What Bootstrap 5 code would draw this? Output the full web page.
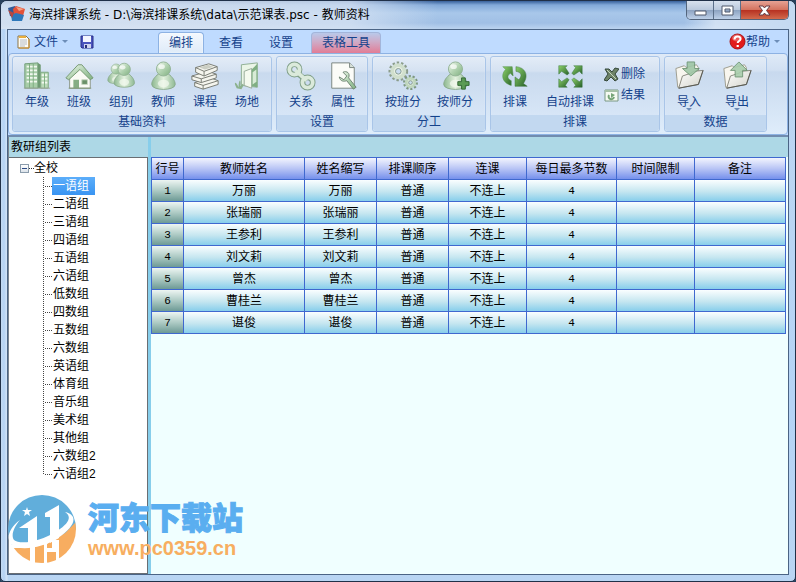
<!DOCTYPE html>
<html lang="zh-CN">
<head>
<meta charset="utf-8">
<meta name="viewport" content="width=device-width, initial-scale=1">
<title>海滨排课系统 - 教师资料</title>
<link rel="stylesheet" href="https://cdn.jsdelivr.net/npm/bootstrap@5.3.0/dist/css/bootstrap.min.css">
<style>
body{font:12px/18px "Liberation Sans","Noto Sans CJK SC",sans-serif;color:#000;background:#28405c}
button{font:inherit;color:inherit;background:none;border:0;padding:0}
.app-window{min-height:100vh;border:1px solid #203048;border-radius:7px 7px 5px 5px;padding:0 6px 6px;
 background:linear-gradient(90deg,#c3daf3,#b4d2f4 3px,#d4e5f8 6px,transparent 7px),linear-gradient(#c6d9ef 0,#bcd6f2 90px,#b5d4f6 400px,#b9d5f3)}
.title-bar{height:28px;margin:0 -6px;padding-left:7px;border-radius:6px 6px 0 0;
 background:linear-gradient(90deg,#cbdcef00 0,#cbdcef00 86%,#dce8f6cc 90%,#c4d9f1 100%),linear-gradient(90deg,#dce6f3cc,#dfe7f3cc 15%,#d5e2f3cc 44%,#b9d2ef00 55%),linear-gradient(#37609b,#82a9d9 4px,#a8c7ea 12px,#a0bfe5 22px,#bbd3ef)}
.title-text{font-family:"DejaVu Sans","Noto Sans CJK SC",sans-serif;line-height:20px}
.caption-buttons{height:19px;border:1px solid #52647c;border-top:0;border-radius:0 0 5px 5px;overflow:hidden;margin-right:6px}
.caption-buttons button{width:27px;border-right:1px solid #5b6f89;background:linear-gradient(#d8e1ee,#bac9dd 48%,#8ea4c2 52%,#bdd0e8)}
.caption-buttons .close-win{width:47px;border:0;background:linear-gradient(#e6a294,#d4735f 48%,#b73222 52%,#d26a4c)}
.client{border:1px solid #4b6485;background:#bfdbff}
.tab-strip{height:23px;color:#15428b;padding:0 8px 0 9px}
.quick{width:141px}
.caret-down{border:3px solid transparent;border-top-color:#6d8db8;border-bottom:0}
.ribbon-tabs{gap:4px}
.ribbon-tabs button{width:46px;height:21px;border:1px solid transparent;border-bottom:0;border-radius:4px 4px 0 0}
.ribbon-tabs .is-active{background:linear-gradient(#f3f8fe,#dfebf8);border-color:#8db2e3;box-shadow:0 0 2px #fff inset}
.ribbon-tabs .context-tab{width:70px;margin-left:3px;background:linear-gradient(#b9c9ea,#cfaac6 45%,#e27d96);border-color:#a3b5da}
.ribbon{border:1px solid #8db2e3;border-radius:4px;padding:2px 3px;gap:4px;
 background:linear-gradient(#dfeaf7,#d2e0f2 16px,#c8d9ee 18px,#dfedfb);color:#15428b}
.ribbon-group{border:1px solid #a9c5e8;border-radius:3px;background:linear-gradient(#e3ecf7,#d5e2f2 14px,#c9daee 16px,#dceafa);box-shadow:inset 0 0 1px #fff}
.group-items{height:58px;padding:3px 3px 0}
.group-name{height:16px;line-height:15px;text-align:center;background:#c2d8f0;border-radius:0 0 3px 3px}
.tool{width:42px;line-height:17px;position:relative}
.tool svg{display:block;margin:0 auto 2px;width:30px;height:32px}
.tool-wide{width:52px}
.tool .caret-down{position:absolute;left:18px;bottom:0}
.small-tools{gap:4px;padding:6px 11px 0 8px}
.small-tools button{line-height:17px;gap:2px}
.data-tools{gap:6px}
.workspace{background:#f0ffff;border-top:2px solid #718caf}
.side-panel{width:140px;background:#add8e6;border-left:1px solid #7b8590}
.panel-head{height:20px;line-height:21px;padding-left:2px}
.tree-box{background:#fff;border:1px solid #696e73;border-left:0;padding:1px 0 0 11px}
.tree-line{height:18px;line-height:17px}
.toggle{width:9px;height:9px;border:1px solid #8b9cac;background:linear-gradient(#fff,#dce3ea);display:flex;align-items:center;justify-content:center}
.toggle::after{content:"";width:5px;height:1px;background:#2c4a86}
.stub{width:5px;border-top:1px dotted #333}
.tree-list{margin:0 0 0 23px;padding:0;list-style:none;font-size:12px}
.tree-list li{height:18px;padding-left:9px;
 background:repeating-linear-gradient(#444 0 1px,#fff 1px 2px) 0 0/1px 100% no-repeat,repeating-linear-gradient(90deg,#444 0 1px,#fff 1px 2px) 0 9px/9px 1px no-repeat}
.tree-list li:last-child{background-size:1px 10px,9px 1px}
.tree-list a{display:inline-block;line-height:18px;height:18px;padding:0 6px 0 1px;color:#000;text-decoration:none}
.tree-list a.is-selected{background:linear-gradient(#5caefa,#3994f2);color:#fff}
.split-bar{width:3px;background:#87ceeb}
.grid-head{height:20px;background:#add8e6}
.grid-wrap{padding-right:2px}
.teacher-grid{width:100%;table-layout:fixed;border-collapse:collapse;text-align:center}
.teacher-grid th,.teacher-grid td{height:22px;line-height:18px;padding:0;border:1px solid #3f68cf;font-weight:400;background-clip:padding-box}
.teacher-grid thead th{background-image:linear-gradient(#f3f5fe,#b9c5f5 50%,#7590ec)}
.teacher-grid td{background-image:linear-gradient(#fafeff,#c5e6f0 55%,#87ceeb)}
.teacher-grid tbody th{background-image:linear-gradient(#edf5f2,#aecbc5 50%,#6d9a95)}
.teacher-grid tbody th,.teacher-grid .num{font-family:"Liberation Mono",monospace;font-size:11px}
.c-no{width:32px}.c-name{width:121px}.c-std{width:72px}.c-mid{width:78px}.c-max{width:90px}
.site-mark{position:absolute;left:6px;bottom:16px;gap:11px;pointer-events:none}
.site-name{font:900 31px/38px "Noto Sans CJK SC",sans-serif;color:#5aaef0;-webkit-text-stroke:1px #5aaef0}
.site-url{font:bold 20px/27px "Liberation Sans",sans-serif;color:#f7ae60}
</style>
<script src="https://cdn.jsdelivr.net/npm/bootstrap@5.3.0/dist/js/bootstrap.bundle.min.js"></script>
</head>
<body>
<svg width="0" height="0" class="position-absolute" aria-hidden="true">
 <defs>
  <linearGradient id="gr" x1="0" y1="0" x2="1" y2="1"><stop offset="0" stop-color="#f4faf2"/><stop offset=".5" stop-color="#b2d3b1"/><stop offset="1" stop-color="#80b081"/></linearGradient>
  <linearGradient id="bodyfill" x1="0" y1="0" x2="1" y2="0"><stop offset="0" stop-color="#8db890"/><stop offset=".5" stop-color="#e4f2df"/><stop offset="1" stop-color="#8fba94"/></linearGradient>
  <linearGradient id="arrow" x1="0" y1="0" x2="1" y2="1"><stop offset="0" stop-color="#8fd36b"/><stop offset="1" stop-color="#255e28"/></linearGradient>
  <linearGradient id="paper" x1="0" y1="0" x2="1" y2="1"><stop offset="0" stop-color="#fff"/><stop offset="1" stop-color="#d3d3ca"/></linearGradient>
  <clipPath id="disc"><circle cx="35" cy="36" r="34"/></clipPath>
  <symbol id="person" viewBox="0 0 32 32"><path d="M11 14C7 17 4 21 4 25c0 7 25 7 25 0 0-4-3-8-7-11z" fill="url(#bodyfill)" stroke="#87a98a"/><circle cx="16.500" cy="8.500" r="7.500" fill="url(#gr)" stroke="#91b294"/><ellipse cx="14.500" cy="6" rx="3.500" ry="2.500" fill="#fff" opacity=".7"/><ellipse cx="16.500" cy="24" rx="6" ry="4" fill="#f3faef" opacity=".7"/></symbol>
  <symbol id="folder" viewBox="0 0 32 32"><path d="M2 8l9-3 2 2 11-3 2 3-1 18-21 3z" fill="#f8f6ef" stroke="#9b9a8c"/><path d="M5 29l4-13 9-3 3-2 10-1-5 15z" fill="url(#paper)" stroke="#85857b"/><path d="M5 29l21-4 5-15" fill="none" stroke="#55564f"/></symbol>
 </defs>
</svg>

<div class="app-window d-flex flex-column position-relative">
 <header class="title-bar d-flex align-items-start">
  <svg class="mt-1 me-1 flex-shrink-0" width="17" height="17" viewBox="0 0 17 17"><path d="M0 3l7-2 3 4-2 8-6-2z" fill="#315a98"/><path d="M5 4l3-3 9 3-2 7-9-1z" fill="#e35138"/><path d="M8 2l8 2-5 2z" fill="#f6a082"/><path d="M3 10l5-2 8 2-2 6H4z" fill="#2e78ba"/><path d="M0 5l6 3-2 5z" fill="#b8473e"/></svg>
  <div class="title-text flex-grow-1 text-truncate pt-1">海滨排课系统 - D:\海滨排课系统\data\示范课表.psc - 教师资料</div>
  <div class="caption-buttons d-flex flex-shrink-0">
   <button aria-label="最小化"><svg width="13" height="12" viewBox="0 0 13 12"><path d="M1 6h11v4H1z" fill="#fff" stroke="#50586a"/></svg></button>
   <button aria-label="最大化"><svg width="13" height="12" viewBox="0 0 13 12"><path d="M1 1h11v9H1zM4 4v3h5V4z" fill="#fff" stroke="#50586a" fill-rule="evenodd"/></svg></button>
   <button class="close-win" aria-label="关闭"><svg width="13" height="12" viewBox="0 0 13 12"><path d="M1 1h4l1.500 2L8 1h4L8.500 5.500 12 10H8L6.500 8 5 10H1l3.500-4.500z" fill="#fff" stroke="#643a42"/></svg></button>
  </div>
 </header>

 <div class="client flex-grow-1 d-flex flex-column">
  <div class="tab-strip d-flex align-items-end">
   <div class="quick d-flex align-items-center align-self-center">
    <button class="d-flex align-items-center"><svg class="me-1" width="13" height="15" viewBox="0 0 13 15"><path d="M1 2h8l3 3v9H1z" fill="#fffdf5" stroke="#8b7446"/><path d="M2 2h7v2H2z" fill="#e8ae3f"/><path d="M3 6h7M3 8h7M3 10h7M3 12h5" stroke="#b2b9c4"/><path d="M12 5v9H2" fill="none" stroke="#d6952d"/></svg>文件<span class="caret-down ms-1"></span></button>
    <button class="ms-auto me-5" aria-label="保存"><svg class="d-block me-3" width="14" height="14" viewBox="0 0 14 14"><path d="M1 1h12v12H2l-1-1z" fill="#4b55bd" stroke="#292f8a"/><path d="M3 1h8v6H3z" fill="#f4f6ff"/><path d="M4 9h7v4H4z" fill="#cfd5ee"/><path d="M5 10h2v3H5z" fill="#28307a"/></svg></button>
   </div>
   <nav class="ribbon-tabs d-flex" aria-label="功能区">
    <button class="is-active">编排</button><button>查看</button><button>设置</button><button class="context-tab">表格工具</button>
   </nav>
   <button class="ms-auto d-flex align-items-center align-self-center"><svg width="17" height="17" viewBox="0 0 17 17"><circle cx="8.500" cy="8.500" r="7.500" fill="#e21b1b" stroke="#ab1014"/><ellipse cx="8" cy="5" rx="5" ry="3.500" fill="#fff" opacity=".28"/><path d="M5.500 6.500c0-4 6-4 6-.5 0 2-2.800 2-2.800 4" fill="none" stroke="#fff" stroke-width="2"/><path d="M7.600 12h2.200v2H7.600z" fill="#fff"/></svg>帮助<span class="caret-down ms-1"></span></button>
  </div>

  <div class="ribbon d-flex">
   <section class="ribbon-group">
    <div class="group-items d-flex align-items-start">
     <button class="tool"><svg viewBox="0 0 32 32"><path d="M3 3l14-1v27H3z" fill="#a7cda8" stroke="#719d77"/><path d="M17 2l3 2v25h-3z" fill="#6f9a73"/><path d="M20 12h8v17h-8z" fill="#bad9b8" stroke="#7ba67e"/><path d="M5 6h11M5 10h11M5 14h11M5 18h11M5 22h11M21 15h6M21 19h6M21 23h6" stroke="#f1f8ef" stroke-width="2"/><path d="M8 3v26M12 3v26M24 13v16" stroke="#7dac80"/><path d="M2 29h28" stroke="#a1aaa0"/></svg>年级</button>
     <button class="tool"><svg viewBox="0 0 32 32"><path d="M6 17L17 6l11 11v12H6z" fill="#fafbf5" stroke="#8a9585"/><path d="M2 18L15 4h4l12 14-3 2L17 9 5 20z" fill="url(#gr)" stroke="#72966f"/><path d="M10 20h6v9h-6z" fill="#86ad84"/><path d="M19 20h6v5h-6z" fill="#6b9168" stroke="#c8d8c2"/><path d="M5 29h24" stroke="#819774"/></svg>班级</button>
     <button class="tool"><svg viewBox="0 0 32 32"><svg x="-1" y="2" width="23" height="24"><use href="#person" width="23" height="24"/></svg><svg x="5" y="0" width="28" height="31"><use href="#person" width="28" height="31"/></svg></svg>组别</button>
     <button class="tool"><svg viewBox="0 0 32 32"><use href="#person"/></svg>教师</button>
     <button class="tool"><svg viewBox="0 0 32 32"><g stroke="#74786f" fill="#f5f5ee"><path d="M5 23l17-5 8 3v4l-16 5-9-3z"/><path d="M5 23l9 3 16-5M14 26v4" fill="none"/><path d="M2 16l17-5 9 3v4l-16 5-10-3z"/><path d="M2 16l10 3 16-5M12 19v4" fill="none"/><path d="M6 7l14-4 9 3v4l-14 6-9-4z"/><path d="M6 7l9 4 14-5M15 11v5" fill="none"/></g><path d="M10 7l9-3 6 2-9 3z" fill="#cbcec3"/></svg>课程</button>
     <button class="tool"><svg viewBox="0 0 32 32"><path d="M10 4l17-2v26l-17-2z" fill="#eaf5e7" stroke="#8dad91"/><path d="M13 11l8-3v21l-8-3z" fill="#f5faef" stroke="#95a796"/><path d="M21 9l6-6v25l-6-1z" fill="#80af83"/><path d="M22 12l4-3v13l-4 3z" fill="#d8ebd7"/><path d="M5 29c-4-7-1-8 2-1 0-9 3-10 2-1 3-5 5-3 1 3z" fill="#8cb28d"/></svg>场地</button>
    </div><div class="group-name">基础资料</div>
   </section>
   <section class="ribbon-group">
    <div class="group-items d-flex align-items-start">
     <button class="tool"><svg viewBox="0 0 32 32"><g fill="none" stroke="#7f9e87" stroke-width="6"><circle cx="9" cy="9" r="5.500"/><circle cx="23" cy="23" r="5.500"/><path d="M10 11l12 10"/></g><g fill="none" stroke="#dbeadb" stroke-width="4"><circle cx="9" cy="9" r="5.500"/><circle cx="23" cy="23" r="5.500"/><path d="M10 10l12 11"/></g></svg>关系</button>
     <button class="tool"><svg viewBox="0 0 32 32"><path d="M4 2h19l5 5v22H4z" fill="#fbfcf8" stroke="#77837e"/><path d="M23 2v5h5" fill="#d9e2da" stroke="#77837e"/><path d="M12 17c1 5 5 5 8 4l7 9 3-2-8-10c2-5-2-8-6-6l4 4-3 4z" fill="url(#gr)" stroke="#6c8270"/></svg>属性</button>
    </div><div class="group-name">设置</div>
   </section>
   <section class="ribbon-group">
    <div class="group-items d-flex align-items-start px-1">
     <button class="tool tool-wide"><svg viewBox="0 0 32 32"><circle cx="11" cy="11" r="9" fill="none" stroke="#8b9d8c" stroke-width="3" stroke-dasharray="2.500 2"/><circle cx="11" cy="11" r="6.500" fill="#eef4e9" stroke="#d0dfcd" stroke-width="4"/><circle cx="11" cy="11" r="3" fill="#c9dcf0" stroke="#82998a"/><circle cx="24" cy="23" r="6.500" fill="none" stroke="#7e9881" stroke-width="3" stroke-dasharray="2.200 1.800"/><circle cx="24" cy="23" r="4.500" fill="#eaf3e6" stroke="#bfd6bd" stroke-width="3"/><circle cx="24" cy="23" r="2" fill="#c9dcf0" stroke="#82998a"/></svg>按班分</button>
     <button class="tool tool-wide"><svg viewBox="0 0 32 32"><use href="#person"/><path d="M23 18h4v4h4v4h-4v4h-4v-4h-4v-4h4z" fill="#5b9b54" stroke="#326734"/></svg>按师分</button>
    </div><div class="group-name">分工</div>
   </section>
   <section class="ribbon-group">
    <div class="group-items d-flex align-items-start">
     <button class="tool"><svg viewBox="0 0 32 32"><path d="M13 6H3l3 3c-6 6-3 15 6 17v-5c-4-2-5-5-1-8l3 3z" fill="url(#arrow)" stroke="#4b8b43" stroke-width=".5"/><path d="M17 6v5c6 1 7 5 3 9l-4-3v10h13l-4-3c6-9 2-17-8-18z" fill="url(#arrow)" stroke="#376f34" stroke-width=".5"/></svg>排课</button>
     <button class="tool tool-wide ms-2"><svg viewBox="0 0 32 32"><g fill="url(#arrow)" stroke="#34713a" stroke-width=".5"><path d="M4 5h9l-2 2 4 6-2 2-6-4-3 3z"/><path d="M29 5h-9l2 2-4 6 2 2 6-4 3 3z"/><path d="M4 28h9l-2-2 4-6-2-2-6 4-3-3z"/><path d="M29 28h-9l2-2-4-6 2-2 6 4 3-3z"/></g></svg>自动排课</button>
     <div class="small-tools d-flex flex-column">
      <button class="d-flex align-items-center"><svg width="15" height="15" viewBox="0 0 15 15"><path d="M1 2h4l3 3 3-4 4 1-4 5 3 5-3 2-4-4-4 4-3-1 4-6z" fill="#6d8368" stroke="#35483b"/><path d="M3 3l9 9" stroke="#c6d4bf"/></svg>删除</button>
      <button class="d-flex align-items-center"><svg width="15" height="15" viewBox="0 0 15 15"><path d="M1 2h13v11H1z" fill="#f5faf2" stroke="#789782"/><path d="M1 3h13" stroke="#a6c1a6" stroke-width="2"/><path d="M5 7c-2 4 4 6 5 2" fill="none" stroke="#76a477" stroke-width="2"/><path d="M7 5v5l4-3z" fill="#76a477"/></svg>结果</button>
     </div>
    </div><div class="group-name">排课</div>
   </section>
   <section class="ribbon-group">
    <div class="group-items data-tools d-flex align-items-start pe-2">
     <button class="tool"><svg viewBox="0 0 32 32"><use href="#folder"/><path d="M14 1h8v7h5l-9 8-9-8h5z" fill="#9fc6a5" stroke="#66906d" opacity=".9"/></svg>导入<span class="caret-down"></span></button>
     <button class="tool"><svg viewBox="0 0 32 32"><use href="#folder"/><path d="M14 17h8v-7h5l-9-9-9 9h5z" fill="#a8cdac" stroke="#66906d" opacity=".9"/></svg>导出<span class="caret-down"></span></button>
    </div><div class="group-name">数据</div>
   </section>
  </div>

  <main class="workspace flex-grow-1 d-flex">
   <aside class="side-panel d-flex flex-column flex-shrink-0">
    <div class="panel-head">教研组列表</div>
    <div class="tree-box flex-grow-1">
     <div class="tree-line d-flex align-items-center"><button class="toggle" aria-label="折叠"></button><span class="stub"></span>全校</div>
     <ul class="tree-list">
      <li><a href="#" class="is-selected">一语组</a></li><li><a href="#">二语组</a></li><li><a href="#">三语组</a></li><li><a href="#">四语组</a></li><li><a href="#">五语组</a></li><li><a href="#">六语组</a></li><li><a href="#">低数组</a></li><li><a href="#">四数组</a></li><li><a href="#">五数组</a></li><li><a href="#">六数组</a></li><li><a href="#">英语组</a></li><li><a href="#">体育组</a></li><li><a href="#">音乐组</a></li><li><a href="#">美术组</a></li><li><a href="#">其他组</a></li><li><a href="#">六数组2</a></li><li><a href="#">六语组2</a></li>
     </ul>
    </div>
   </aside>
   <div class="split-bar flex-shrink-0"></div>
   <section class="flex-grow-1 overflow-hidden">
    <div class="grid-head"></div>
    <div class="grid-wrap">
     <table class="teacher-grid">
      <colgroup><col class="c-no"><col class="c-name"><col class="c-std"><col class="c-std"><col class="c-mid"><col class="c-max"><col class="c-mid"><col></colgroup>
      <thead><tr><th>行号</th><th>教师姓名</th><th>姓名缩写</th><th>排课顺序</th><th>连课</th><th>每日最多节数</th><th>时间限制</th><th>备注</th></tr></thead>
      <tbody>
       <tr><th>1</th><td>万丽</td><td>万丽</td><td>普通</td><td>不连上</td><td class="num">4</td><td></td><td></td></tr>
       <tr><th>2</th><td>张瑞丽</td><td>张瑞丽</td><td>普通</td><td>不连上</td><td class="num">4</td><td></td><td></td></tr>
       <tr><th>3</th><td>王参利</td><td>王参利</td><td>普通</td><td>不连上</td><td class="num">4</td><td></td><td></td></tr>
       <tr><th>4</th><td>刘文莉</td><td>刘文莉</td><td>普通</td><td>不连上</td><td class="num">4</td><td></td><td></td></tr>
       <tr><th>5</th><td>曾杰</td><td>曾杰</td><td>普通</td><td>不连上</td><td class="num">4</td><td></td><td></td></tr>
       <tr><th>6</th><td>曹桂兰</td><td>曹桂兰</td><td>普通</td><td>不连上</td><td class="num">4</td><td></td><td></td></tr>
       <tr><th>7</th><td>谌俊</td><td>谌俊</td><td>普通</td><td>不连上</td><td class="num">4</td><td></td><td></td></tr>
      </tbody>
     </table>
    </div>
   </section>
  </main>
 </div>

 <div class="site-mark d-flex align-items-center">
  <svg width="70" height="72" viewBox="0 0 70 72" aria-hidden="true"><g clip-path="url(#disc)"><path d="M0 0h70v36L46 48 4 52 0 46z" fill="#61aedb"/><path d="M0 55l14 0 26-4 18-11 12-12v44H0z" fill="#f7ad60"/></g><path d="M13 27C2 35-1 45 4 51c8 8 31 4 47-6 17-11 21-23 7-26 6 4 6 10-8 19C33 49 13 52 7 47c-3-4-1-12 6-20z" fill="#fff"/><path d="M12 35l18-12v28h-9V35z" fill="#fff"/><path d="M38 20l14-8v33l-9 5V24h-5z" fill="#fff"/><path d="M23 50h5v20h-5zM37 49h3v6h5v-8h7v22h-3V59h-9v11h-3z" fill="#fff"/><path d="M20 14l1 3h4l-3 2 1 4-3-2-3 2 1-4-3-2h4z" fill="#fff"/></svg>
  <div><div class="site-name">河东下载站</div><div class="site-url">www.pc0359.cn</div></div>
 </div>
</div>
</body>
</html>
